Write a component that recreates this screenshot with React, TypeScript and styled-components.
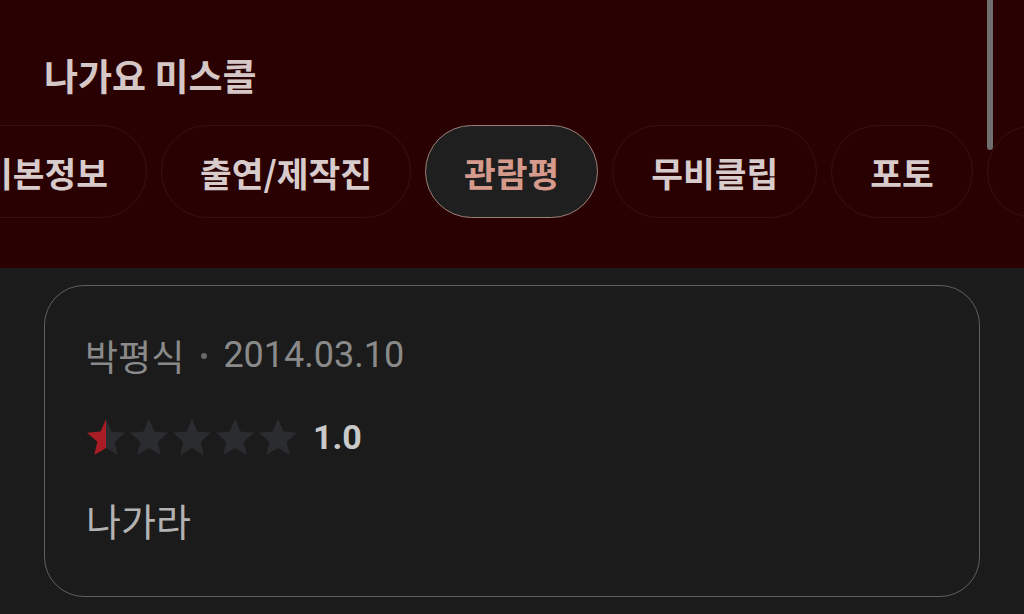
import styled, { createGlobalStyle } from 'styled-components';

const GlobalStyle = createGlobalStyle`
  html, body {
    margin: 0;
    padding: 0;
    background: #1b1b1b;
    font-family: Roboto, "Noto Sans CJK KR", sans-serif;
  }
`;

const Page = styled.div`
  position: relative;
  width: 1024px;
  height: 614px;
  overflow: hidden;
  background: #1b1b1b;
`;

const Header = styled.header`
  background: #2a0103;
  padding: 51px 0 50px;
`;

const Title = styled.h1`
  margin: 0 0 26px 44px;
  font-family: "Noto Sans CJK KR", sans-serif;
  font-size: 37px;
  line-height: 48px;
  font-weight: 700;
  color: #d6c7c7;
`;

const TabTrack = styled.nav`
  display: flex;
  gap: 14px;
  margin-left: -58px;
  white-space: nowrap;
`;

const Tab = styled.div<{ $active?: boolean }>`
  flex: none;
  display: flex;
  align-items: center;
  height: 93px;
  box-sizing: border-box;
  padding: 0 38px;
  border-radius: 47px;
  font-family: "Noto Sans CJK KR", sans-serif;
  font-size: 34.5px;
  font-weight: 700;
  color: ${({ $active }) => ($active ? '#d59a8b' : '#d8cbcb')};
  background: ${({ $active }) => ($active ? '#1f1f1f' : 'transparent')};
  border: ${({ $active }) =>
    $active ? '1.5px solid #9c8079' : '1px solid #3a0f12'};
`;

// Overlay scrollbar thumb on the right edge.
const ScrollThumb = styled.div`
  position: absolute;
  top: -6px;
  left: 987px;
  width: 6px;
  height: 156px;
  border-radius: 3px;
  background: #6f6f6f;
`;

const Content = styled.main`
  padding: 17px 44px 0;
`;

const ReviewCard = styled.article`
  box-sizing: border-box;
  width: 936px;
  height: 312px;
  padding: 45px 42px 0;
  border: 1px solid #5f5f5f;
  border-radius: 40px;
`;

const MetaLine = styled.div`
  display: flex;
  align-items: center;
  height: 48px;
  margin-left: -2px;
  font-size: 36px;
  color: #8a8a8a;
`;

const Dot = styled.span`
  width: 6px;
  height: 6px;
  margin: 2px 16px 0 17px;
  border-radius: 50%;
  background: #6a6a6a;
`;

const RatingRow = styled.div`
  display: flex;
  align-items: center;
  height: 40px;
  margin: 38px 0 0 -1px;
`;

const Stars = styled.div`
  display: flex;
  gap: 3px;
`;

const Score = styled.span`
  margin-left: 15px;
  font-size: 34px;
  font-weight: 700;
  color: #c9c9c9;
`;

const Body = styled.p`
  margin: 38px 0 0 -1px;
  font-family: "Noto Sans CJK KR", sans-serif;
  font-size: 38px;
  line-height: 50px;
  color: #b3b3b3;
`;

const STAR_PATH =
  'M12 17.27L18.18 21l-1.64-7.03L22 9.24l-7.19-.61L12 2 9.19 8.63 2 9.24l5.46 4.73L5.82 21z';

function Star({ fill, id }: { fill: number; id: string }) {
  return (
    <svg width="40" height="38" viewBox="1.5 1.5 21 20">
      <defs>
        <linearGradient id={id} x1="2" x2="22" y1="0" y2="0" gradientUnits="userSpaceOnUse">
          <stop offset={fill} stopColor="#a81d23" />
          <stop offset={fill} stopColor="#2b2c2f" />
        </linearGradient>
      </defs>
      <path d={STAR_PATH} fill={`url(#${id})`} />
    </svg>
  );
}

const tabs = ['기본정보', '출연/제작진', '관람평', '무비클립', '포토', '영상'];

export default function App() {
  const rating = 1.0;
  return (
    <Page>
      <GlobalStyle />
      <Header>
        <Title>나가요 미스콜</Title>
        <TabTrack>
          {tabs.map((tab) => (
            <Tab key={tab} $active={tab === '관람평'}>
              {tab}
            </Tab>
          ))}
        </TabTrack>
      </Header>
      <ScrollThumb />
      <Content>
        <ReviewCard>
          <MetaLine>
            박평식
            <Dot />
            2014.03.10
          </MetaLine>
          <RatingRow>
            <Stars>
              {[0, 1, 2, 3, 4].map((i) => {
                const v = Math.max(0, Math.min(1, rating / 2 - i));
                return <Star key={i} id={`star-${i}`} fill={v} />;
              })}
            </Stars>
            <Score>{rating.toFixed(1)}</Score>
          </RatingRow>
          <Body>나가라</Body>
        </ReviewCard>
      </Content>
    </Page>
  );
}
